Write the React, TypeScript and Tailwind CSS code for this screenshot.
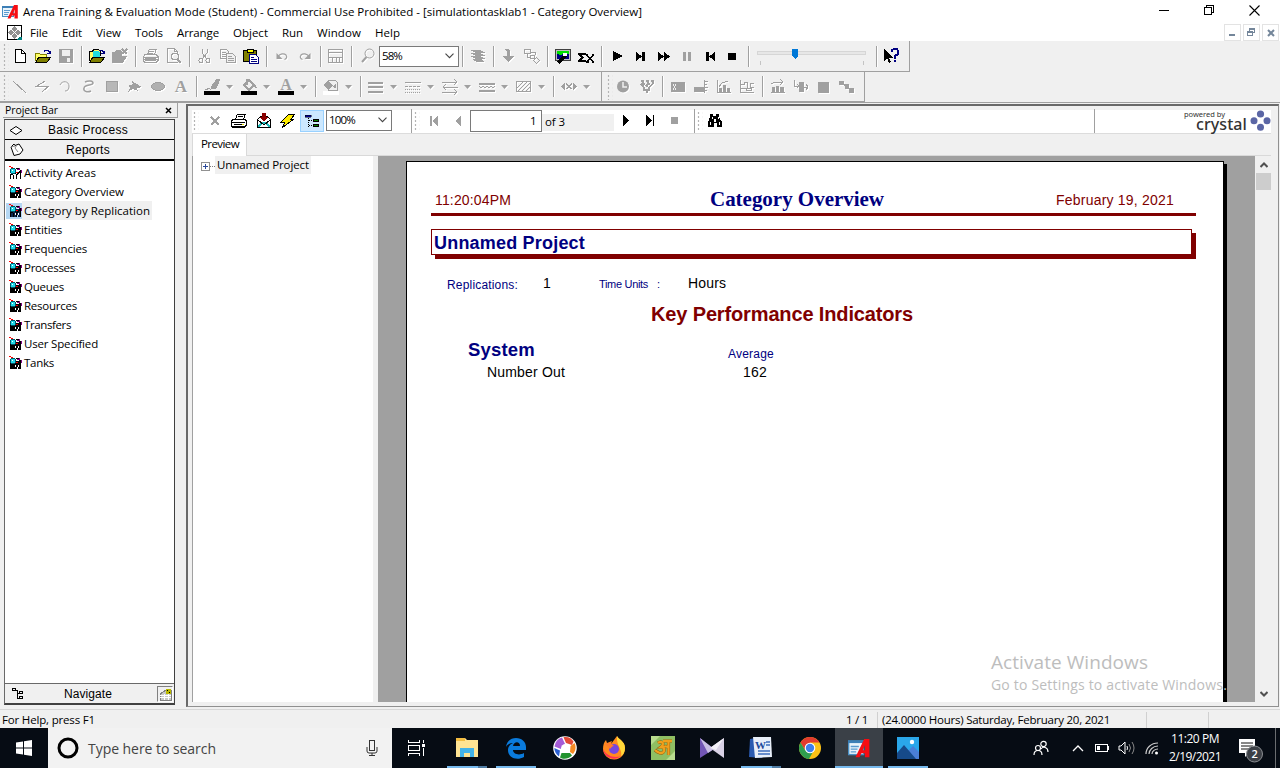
import { useLayoutEffect, useRef, type ReactNode } from "react";

const UI = "font-['Open_Sans','Noto_Sans',sans-serif] text-[11.5px]";
const ARIAL = "font-['Liberation_Sans',Arial,sans-serif]";

/* Single line of text tracked so that it fills the given width. */
function Fit({ w, children, className = "" }: { w: number; children: string; className?: string }) {
  const ref = useRef<HTMLSpanElement>(null);
  useLayoutEffect(() => {
    const el = ref.current;
    if (!el) return;
    el.style.letterSpacing = "0px";
    const natural = el.getBoundingClientRect().width;
    el.style.letterSpacing = `${(w - natural) / children.length}px`;
  }, [w, children]);
  return (
    <span ref={ref} className={`inline-block shrink-0 whitespace-pre ${className}`}>
      {children}
    </span>
  );
}

function Ico({ children, w = 16, h = 16, smooth = false, className = "" }: { children: ReactNode; w?: number; h?: number; smooth?: boolean; className?: string }) {
  return (
    <svg width={w} height={h} viewBox={`0 0 ${w} ${h}`} fill="none" shapeRendering={smooth ? "auto" : "crispEdges"} className={`block shrink-0 ${className}`}>
      {children}
    </svg>
  );
}

/* Disabled toolbar glyph: grey with a white emboss. */
function Dim({ children, smooth = false }: { children: ReactNode; smooth?: boolean }) {
  return (
    <Ico smooth={smooth} className="text-[#a0a0a0] drop-shadow-[1px_1px_0_#ffffff]">
      {children}
    </Ico>
  );
}

const Btn = ({ children }: { children: ReactNode }) => <div className="flex h-full w-[23px] shrink-0 items-center pl-[3px]">{children}</div>;
const Sep = () => (
  <div className="flex h-full w-2 shrink-0 items-center justify-center">
    <div className="h-[21px] w-0.5 border-l border-r border-l-[#a0a0a0] border-r-white" />
  </div>
);
const Drop = () => (
  <div className="flex h-full w-[14px] shrink-0 items-center pl-0.5">
    <svg width="8" height="5" viewBox="0 0 8 5" className="mt-0.5 block drop-shadow-[1px_1px_0_#fff]">
      <path d="M0 0h7L3.5 4z" fill="#a0a0a0" />
    </svg>
  </div>
);
const Grip = ({ h = "h-[26px]" }: { h?: string }) => (
  <div className={`${h} w-[7px] shrink-0 bg-[radial-gradient(#b4b4b4_1px,transparent_1.2px)] bg-[size:5px_4px]`} />
);
const Chevron = () => (
  <svg width="9" height="6" viewBox="0 0 9 6" className="block shrink-0">
    <path d="M.5.7l4 4 4-4" fill="none" stroke="#444" strokeWidth="1.1" />
  </svg>
);

const S = "currentColor";

function ArenaLogo({ big = false }: { big?: boolean }) {
  return (
    <svg width={big ? 23 : 17} height={big ? 23 : 16} viewBox="0 0 17 16" className="block shrink-0">
      <rect x="0.5" y="2.5" width="11" height="10" fill="#eaf4fb" stroke="#4a90c4" />
      <path d="M0 3h12" stroke="#3c7fb6" strokeWidth="2" />
      <path d="M2 6.5h6M2 8.5h5M2 10.5h4" stroke="#5a9bd0" />
      <path d="M5.5 14.5L12 1h3.800v13.5h-3.3v-3H9.900l-1.4 3zM11 9.3h1.6V5.4z" fill="#f70d12" />
    </svg>
  );
}

function Toolbar1() {
  return (
    <div className="flex h-[31px] w-[910px] items-center border-r border-b border-[#a0a0a0] pl-0.5">
      <Grip />
      <Btn><Ico><path d="M3.5 1.5h6l4 4v9h-10z" fill="#fff" stroke="#000" /><path d="M9.5 1.5v4h4" stroke="#000" /></Ico></Btn>
      <Btn><Ico><path d="M.5 13V5.5h4l1 1h6V9" fill="#ffff66" stroke="#808000" /><path d="M1 14l3-5h12l-4 5z" fill="#808000" stroke="#000" /><path d="M9 3.5l1-1h3l2 2m0-2v3h-3" stroke="#000080" /></Ico></Btn>
      <Btn><Dim><path d="M1 1h14v14H1z" fill={S} /><path d="M4 2h8v6H4zM9 10h3v4H9z" fill="#f0f0f0" /></Dim></Btn>
      <Sep />
      <Btn><Ico><path d="M.5 13V3.5h3l1-2h5l2 2V8" fill="#ffff66" stroke="#000" /><path d="M4 3h5l2 2v5H4z" fill="#20dede" /><path d="M1 14l3-5h12l-4 5z" fill="#808000" stroke="#000" /><path d="M10 2.5h3l2 2m0-2v3h-3" stroke="#000080" /></Ico></Btn>
      <Btn><Dim><path d="M0 4h3l1-2h5l1 2v4h5l-4 7H0z" fill={S} /><path d="M10 1l5 5m0-5l-5 5" stroke={S} strokeWidth="1.500" /></Dim></Btn>
      <Sep />
      <Btn><Dim><path d="M4.5 6l2-5h7l-2 5M2 6.5h11l2 2v4l-2 2H2l-2-2v-3z" stroke={S} /><path d="M1 9h14M1 11h14M6 3h5M5 5h5" stroke={S} /><path d="M2 10h11v3H2z" fill={S} /></Dim></Btn>
      <Btn><Dim><path d="M12 14.5H1.5V.5h7l3 3V5M8.5.5v3h3" stroke={S} /><circle cx="9" cy="8.500" r="3.500" stroke={S} /><path d="M11 11l4 4" stroke={S} strokeWidth="2" /></Dim></Btn>
      <Sep />
      <Btn><Dim><path d="M5 1v4l5 6M10 1v4l-5 6" stroke={S} /><circle cx="4" cy="12.500" r="2" stroke={S} /><circle cx="11" cy="12.500" r="2" stroke={S} /></Dim></Btn>
      <Btn><Dim><path d="M.5 1.5h6l2 2v7h-8z" stroke={S} /><path d="M2 4.5h4M2 6.5h4M2 8.5h4" stroke={S} /><path d="M6.500 5.500h6l3 3v6h-9z" fill="#f0f0f0" stroke={S} /><path d="M8 8.500h4M8 10.500h6M8 12.500h6" stroke={S} /></Dim></Btn>
      <Btn><Ico><path d="M.500 2.500h13v11H.500z" fill="#808000" stroke="#000" /><path d="M4 1h6v3H4z" fill="#ffff00" stroke="#000" /><path d="M6.500 6.500h6l3 3v6h-9z" fill="#fff" stroke="#000080" /><path d="M8 9.500h3M8 11.500h6M8 13.500h6" stroke="#000080" /></Ico></Btn>
      <Sep />
      <Btn><Dim smooth><path d="M4 8.500c2-3 6-3.500 8-1.500 1.500 2 .5 4-1.500 4.500" stroke={S} strokeWidth="1.200" /><path d="M2.500 5v6h6z" fill={S} /></Dim></Btn>
      <Btn><Dim smooth><path d="M12 8.500c-2-3-6-3.500-8-1.500-1.500 2-.5 4 1.500 4.500" stroke={S} strokeWidth="1.200" /><path d="M13.500 5v6h-6z" fill={S} /></Dim></Btn>
      <Sep />
      <Btn><Dim><path d="M.500 1.500h14v13H.500zM1 4.500h14M1 9.500h14M4.500 10v4M8.500 10v4M11.500 10v4" stroke={S} /></Dim></Btn>
      <Sep />
      <div className="flex h-full w-[23px] shrink-0 items-center pl-[5px]"><Dim smooth><circle cx="8.500" cy="5.500" r="4.500" stroke={S} /><path d="M5.500 9L1 14" stroke={S} strokeWidth="2" /></Dim></div>
      <div className={`flex h-[21px] w-20 shrink-0 items-center justify-between border border-[#7a7a7a] bg-white pr-1 pl-0.5 ${UI}`}><Fit w={20}>58%</Fit><Chevron /></div>
      <Sep />
      <Btn><Dim><path d="M0 2h10l6 3H6zM0 5h10l6 3H6zM0 8h10l6 3H6zM2 11h9l4 3H7z" fill={S} /></Dim></Btn>
      <Sep />
      <Btn><Dim><path d="M3 1h4l2 2v5h4l-5.500 6L2 8h4V4z" fill={S} /></Dim></Btn>
      <Btn><Dim><path d="M.500 1.500h6v4h-6zM6.500 7.500h4v3h-4zM3 5.500V9h3M7 4h4v3M12.500 9.500l3 3-3 3-3-3z" stroke={S} /></Dim></Btn>
      <Sep />
      <Btn><Ico><path d="M.500 1.500h15v11H.500z" fill="#c0c0c0" stroke="#404040" /><path d="M2 3h12v8H2z" fill="#000080" /><path d="M2 3h12v3l-4-1-4 2-4-1z" fill="#00e000" /><path d="M3 15l8-8" stroke="#000" strokeWidth="3" /><path d="M8 5h4v3H8z" fill="#fff" /></Ico></Btn>
      <Btn><Ico><path d="M0 5h8v2H3l3 3-3 2h5v2H0v-2l3-2-3-3z" fill="#000" /><path d="M9 7l6 7M15 7l-6 7M8 14h3m3 0h2M8 7h2m4 0h2" stroke="#000" strokeWidth="1.500" /></Ico></Btn>
      <Sep />
      <div className="flex h-full w-[139px] shrink-0 items-center gap-[7px] pl-1">
        <Ico><path d="M3 3v10l10-5z" fill="#000" /></Ico>
        <Ico><path d="M3 4v9l6-4.500zM9 4h3v9H9z" fill="#000" /></Ico>
        <Ico><path d="M2 4v9l6-4.500zM8 4v9l6-4.500z" fill="#000" /></Ico>
        <Ico><path d="M4 4h3v9H4zM9 4h3v9H9z" fill="#a0a0a0" /></Ico>
        <Ico><path d="M4 4h3v9H4zM13 4v9L7 8.500z" fill="#000" /></Ico>
        <Ico><path d="M3 5h8v7H3z" fill="#000" /></Ico>
      </div>
      <Sep />
      <svg width="117" height="24" viewBox="0 0 117 24" className="ml-[3px] block shrink-0" shapeRendering="crispEdges">
        <rect x="1.500" y="7.500" width="108" height="3" fill="#e7e7e7" stroke="#d6d6d6" />
        <path d="M4.500 17v4M107.500 17v4" stroke="#c4c4c4" />
        <path d="M36 5h6v7l-3 3-3-3z" fill="#0078d7" />
      </svg>
      <Sep />
      <svg width="19" height="18" viewBox="0 0 19 18" className="ml-0.5 block shrink-0" shapeRendering="crispEdges" fill="none">
        <path d="M1 2v12l3-3 2 5 2-1-2-4h4z" fill="#000" /><path d="M9 5V3l2-1h3l1 2v3l-3 2v3M11 14h2" stroke="#000080" strokeWidth="2" />
      </svg>
    </div>
  );
}

function Toolbar2() {
  return (
    <div className="flex h-[30px] items-center">
      <div className="flex h-full w-[602px] items-center border-r border-b border-[#a0a0a0] pl-0.5">
        <Grip />
        <Btn><Dim><path d="M1 2l13 12" stroke={S} /></Dim></Btn>
        <Btn><Dim><path d="M10 2L2 7h12l-7 6" stroke={S} /></Dim></Btn>
        <Btn><Dim smooth><path d="M2 6c2-5 9-4 9 1 0 3-1 5-4 5" stroke={S} /></Dim></Btn>
        <Btn><Dim smooth><path d="M4 3c4-2 8-1 8 1 0 3-8 1-9 5-1 3 3 5 7 3" stroke={S} strokeWidth="1.500" /></Dim></Btn>
        <Btn><Dim><path d="M2.500 2.500h11v10h-11z" fill="#b8b8b8" stroke={S} /></Dim></Btn>
        <Btn><Dim><path d="M5 2l10 6-5 1 1 3-5-2-5 3 2-4-2-2 5-2z" fill={S} /></Dim></Btn>
        <Btn><Dim><ellipse cx="8" cy="7.500" rx="6.500" ry="4" fill="#b0b0b0" stroke={S} /></Dim></Btn>
        <Btn><span className="w-4 text-center font-['Liberation_Serif',serif] text-[17px] leading-4 font-bold text-[#a0a0a0] [text-shadow:1px_1px_#fff]">A</span></Btn>
        <Sep />
        <Btn><Ico><path d="M8 7l5-7h3l-4 9-5 1zM1 11l5-2" stroke="#a0a0a0" fill="#a0a0a0" /><path d="M0 12h16v4H0z" fill="#000" /></Ico></Btn><Drop />
        <Btn><Ico><path d="M3 6l5-5 5 5-5 5zM6 0v6M13 5l2 4" stroke="#a0a0a0" strokeWidth="1.500" /><path d="M0 12h16v4H0z" fill="#000" /></Ico></Btn><Drop />
        <Btn><div className="flex w-4 flex-col items-center"><span className="font-['Liberation_Serif',serif] text-[16px] leading-3 font-bold text-[#a0a0a0]">A</span><div className="h-1 w-4 bg-black" /></div></Btn><Drop />
        <Sep />
        <Btn><Ico><path d="M0 12h16v4H0z" fill="#fff" /><path d="M5.500 1.500h7l2 2v8h-9z" stroke="#a0a0a0" /><path d="M0 6l5-4 5 5-5 4zM9 8l4-4v5z" fill="#a0a0a0" /></Ico></Btn><Drop />
        <Sep />
        <Btn><Dim><path d="M0 3.500h15M0 8h15M0 13h15" stroke={S} strokeWidth="2" /></Dim></Btn><Drop />
        <Btn><Dim><path d="M0 3.500h16" stroke={S} /><path d="M0 7.500h16" stroke={S} strokeDasharray="3 1" /><path d="M0 10.500h16M0 13.500h16" stroke={S} strokeDasharray="1 1" /></Dim></Btn><Drop />
        <Btn><Dim><path d="M0 3h15M1 8h15M0 13h15M12 0l3 3-3 3M4 5L1 8l3 3M12 10l3 3-3 3" stroke={S} /></Dim></Btn><Drop />
        <Btn><Dim><path d="M0 4.500h16M0 11.500h16" stroke={S} strokeWidth="2" /><path d="M0 7l2 2 2-2 2 2 2-2 2 2 2-2 2 2 2-2" stroke={S} /></Dim></Btn><Drop />
        <Btn><Dim><path d="M.500 2.500h14v10H.500zM1 9l6-6M2 12l9-9M6 12l8-8M10 12l4-4" stroke={S} /></Dim></Btn><Drop />
        <Sep />
        <Btn><Dim><path d="M4 3v9L0 7.500zM12 3v9l4-4.500z" fill={S} /><path d="M5.500 4.500l5 6M10.500 4.500l-5 6" stroke={S} strokeWidth="1.500" /></Dim></Btn><Drop />
      </div>
      <div className="flex h-full w-[263px] items-center border-r border-b border-[#a0a0a0] pl-1">
        <Grip />
        <Btn><Dim smooth><circle cx="7" cy="7.500" r="6" fill={S} /><path d="M7 3v5h4" stroke="#f0f0f0" strokeWidth="1.500" /></Dim></Btn>
        <Btn><Dim><path d="M2 2h2v3h2M7 2h2v3h2M12 2h2v3M2 5l3 3M7 6l2 2M13 5l-2 3M5 8v3h2M10 8v3H8v3" stroke={S} strokeWidth="1.500" /></Dim></Btn>
        <Sep />
        <Btn><Dim><path d="M1 3h14v10H1z" fill={S} /><path d="M3 5l3 6M6 5l-3 6" stroke="#f0f0f0" /></Dim></Btn>
        <Btn><Dim><path d="M1 8h10v5H1z" fill={S} /><path d="M11.500 1v13M11 2h4M11 5h3M11 8h4M11 11h3" stroke={S} /></Dim></Btn>
        <Btn><Dim><path d="M1.500 1v12.500H15M3 8l3-4 6-2" stroke={S} /><path d="M3 9h3v4H3zM7 6h3v7H7zM11 9h3v4h-3z" fill={S} /></Dim></Btn>
        <Btn><Dim><path d="M1.500 1v12.500H15M2 5h3V3h3v6h3V4h4M2 9h5v2h5V8h3" stroke={S} /></Dim></Btn>
        <Sep />
        <Btn><Dim><path d="M1 13.500h14M1 5l4-2h8M10 0l3 3-3 3" stroke={S} /><path d="M2 8h3v5H2zM6 7h3v6H6zM10 8h4v5h-4z" fill={S} /></Dim></Btn>
        <Btn><Dim><path d="M1.500 1v6h4M4 5l2 2-2 2M11 8h4M13 5l2 3-2 3" stroke={S} /><path d="M6 3h5v10H6z" fill={S} /></Dim></Btn>
        <Btn><Dim><path d="M2 3h11v11H2z" fill={S} /></Dim></Btn>
        <Btn><Dim><path d="M0 2h5v4H0zM6 5h4v5H6zM10 9h5v5h-5z" fill={S} /><path d="M4 5l9 6" stroke={S} /></Dim></Btn>
      </div>
    </div>
  );
}

const reports: [string, number][] = [
  ["Activity Areas", 72], ["Category Overview", 100], ["Category by Replication", 126], ["Entities", 38], ["Frequencies", 63],
  ["Processes", 51], ["Queues", 40], ["Resources", 53], ["Transfers", 47], ["User Specified", 74], ["Tanks", 30],
];

const ReportIcon = ({ outline, active }: { outline: boolean; active: boolean }) => (
  <Ico w={14} h={15}>
    <path d="M0 1.500h2M2 2.500h2" stroke="#f00" />
    <path d="M7 3h4v2h2v3h-3z" fill="#800080" />
    <path d="M1 7h5l2-2h3v3h1v6H9v-2H7v2H1z" fill={outline ? "#fff" : active ? "#0a2850" : "#000"} />
    <path d="M1.500 14v-4l2-1 1 2v3M7.500 14v-4l3-3 1 2v5M6 8l2 2M7 3.500h3M11.500 5v3" stroke="#000" />
    <path d="M8 5h2v1H8zM6 10h1v2H6zM9 10h1v2H9z" fill="#fff" />
    <path d="M7 7.500h2" stroke="#f00" />
    <circle cx="4" cy="6" r="2.800" fill="#20d8e8" stroke="#056" />
    <path d="M3 5h1v1H3z" fill="#fff" />
  </Ico>
);

function ProjectBar() {
  return (
    <div className={`ml-[3px] flex h-full w-[175px] shrink-0 flex-col text-black ${UI}`}>
      <div className="flex h-[15px] items-center justify-between border-r border-b border-[#a0a0a0] pr-[5px] pl-0.5">
        <Fit w={53} className="text-[10.5px] leading-[14px]">Project Bar</Fit>
        <Ico w={7} h={7} smooth><path d="M1 1l5 5M6 1L1 6" stroke="#000" strokeWidth="1.500" /></Ico>
      </div>
      <div className="mt-px ml-px flex h-[586px] w-[171px] flex-col border border-b-2 border-[#404040] border-l-[#696969]">
        <div className={`flex h-5 shrink-0 items-center border-b border-black pl-1 text-[12px] ${ARIAL}`}>
          <Ico w={14} h={10} smooth><path d="M1 5.500l6-4 6 4-6 4z" fill="#fff" stroke="#000" /></Ico>
          <Fit w={80} className="ml-[25px]">Basic Process</Fit>
        </div>
        <div className={`flex h-[21px] shrink-0 items-center border-b-2 border-black pl-[5px] text-[12px] ${ARIAL}`}>
          <Ico w={14} h={13} smooth><path d="M1 4l3-3 1 1.500 4-1.500 4 6-3 4-6 1.500z" fill="#fff" stroke="#000" /><path d="M7 2L5 5l3 4M1 4l4-1" stroke="#888" /></Ico>
          <Fit w={44} className="ml-[42px]">Reports</Fit>
        </div>
        <div className="flex grow flex-col bg-white pt-0.5">
          {reports.map(([name, w], i) => (
            <div key={name} className="flex h-[19px] items-center pl-px">
              <div className={`flex h-4 w-4 items-center pl-[3px] ${i === 2 ? "bg-[#b5d7f3]" : ""}`}><ReportIcon outline={i === 0} active={i === 2} /></div>
              <div className={`flex h-[19px] items-center pr-0.5 pl-0.5 ${i === 2 ? "bg-[#f0f0f0]" : ""}`}><Fit w={w}>{name}</Fit></div>
            </div>
          ))}
        </div>
        <div className={`flex h-5 shrink-0 items-center border-t border-[#696969] text-[12px] ${ARIAL}`}>
          <Ico w={12} h={11} className="ml-[7px]"><path d="M.500.500h3v2h-3zM7.500 3.500h3v2h-3zM7.500 8.500h3v2h-3zM3 2h2v8h2M5 5h2" stroke="#000" /></Ico>
          <Fit w={48} className="ml-10">Navigate</Fit>
          <div className="mr-px ml-auto flex h-4 w-4 items-end justify-end border border-r-white border-b-white border-[#808080]">
            <Ico w={13} h={13}><path d="M1 6l6-4h5v10H1z" fill="#c8c8c8" stroke="#808080" /><path d="M1 7h11M1 9.500h11M5 6v6M9 6v6" stroke="#fff" /><path d="M7 1h5v5H7z" fill="#b9b900" /><path d="M8 2h1v1H8zm2 2h1v1h-1z" fill="#000" /></Ico>
          </div>
        </div>
      </div>
    </div>
  );
}

function CrystalBar() {
  return (
    <div className={`mr-[7px] flex h-6 shrink-0 items-center border-b border-[#dcdcdc] bg-white pb-0.5 ${UI}`}>
      <Grip h="h-5" />
      <Ico className="ml-2"><path d="M4 4l8 8M12 4l-8 8" stroke="#a0a0a0" strokeWidth="2" /></Ico>
      <Ico className="ml-2"><path d="M4.500 6l2-5h8l-2 5M2 6.500h12l1 1v5l-2 2H2l-2-2v-4z" fill="#fff" stroke="#000" /><path d="M7 3.500h5M1 9h13M2 13h11" stroke="#000" /><path d="M3 11h8" stroke="#000" /><path d="M11 11h2" stroke="#dd0" /></Ico>
      <Ico className="ml-[9px]"><path d="M1.500 14.500v-8l3-3h7l3 3v8z" fill="#fff" stroke="#000" /><path d="M2 14l4-4h4l4 4" stroke="#20b8b8" strokeWidth="1.500" /><path d="M2 7l6 5 6-5" stroke="#000" /><path d="M6 0h4v4h2L8 9 4 4h2z" fill="#8b0000" /></Ico>
      <Ico className="ml-2"><path d="M9 1h6l-4 5h3L2 15l3-6H1z" fill="#ffec00" stroke="#000" /></Ico>
      <div className="ml-1 flex h-[22px] w-6 items-center justify-center border border-[#99d1ff] bg-[#cce8ff]">
        <Ico><path d="M1 2h6v2H1z" fill="#000090" stroke="#000" strokeWidth=".5" /><path d="M4.500 5v9M5 7.500h3M5 12.500h3" stroke="#000" strokeDasharray="1 1" /><path d="M9 6.500h5v2H9zM9 11.500h5v2H9z" fill="#008000" stroke="#000" /></Ico>
      </div>
      <div className="ml-0.5 flex h-[21px] w-[66px] shrink-0 items-center justify-between border border-[#7a7a7a] bg-white pr-1 pb-px pl-0.5"><Fit w={26}>100%</Fit><Chevron /></div>
      <div className="ml-[19px] h-6 w-px bg-[#a0a0a0]" />
      <div className="ml-px"><Grip h="h-5" /></div>
      <Ico className="ml-1.5"><path d="M5 3v10" stroke="#a0a0a0" strokeWidth="1.500" /><path d="M12 3v10L6 8z" fill="#a0a0a0" /></Ico>
      <Ico className="ml-2"><path d="M11 3v10L5 8z" fill="#a0a0a0" /></Ico>
      <div className="ml-1 flex h-[22px] w-[72px] items-center justify-end border border-[#7a7a7a] pr-[5px]"><Fit w={6}>1</Fit></div>
      <div className="mt-[3px] flex h-[17px] w-[72px] items-center bg-[#f0f0f0] pl-[3px]"><Fit w={20}>of 3</Fit></div>
      <Ico className="ml-[5px]"><path d="M4 2v11l6-5.500z" fill="#000" /></Ico>
      <Ico className="ml-2"><path d="M3 2v11l6-5.500zM10 2h1v11h-1z" fill="#000" /></Ico>
      <Ico className="ml-[7px]"><path d="M5 4h7v7H5z" fill="#a0a0a0" /></Ico>
      <div className="ml-3 h-6 w-px bg-[#a0a0a0]" />
      <div className="ml-px"><Grip h="h-5" /></div>
      <Ico className="ml-1"><path d="M3 1h3v2h3V1h3v3l3 5v5h-5v-4H7v4H1V9l2-5z" fill="#000" /><path d="M5 4v2M11 4v2M3 9v3M12 9v3M7 6h1v2H7z" stroke="#fff" /></Ico>
      <div className="ml-auto flex h-6 w-[177px] items-center justify-end border-l border-[#a0a0a0]">
        <div className="flex flex-col items-end pr-[3px] text-[#333]">
          <Fit w={41} className="mr-[22px] font-['Noto_Sans',sans-serif] text-[7.5px] leading-[8px]">powered by</Fit>
          <Fit w={51} className="mb-px font-['Noto_Sans',sans-serif] text-[16px] leading-[12px] font-medium">crystal</Fit>
        </div>
        <Ico w={21} h={21} smooth><g fill="#5b66a5"><circle cx="10.500" cy="4" r="3.600" /><circle cx="4" cy="10.700" r="3.500" /><circle cx="17" cy="10.700" r="3.500" /><circle cx="10.500" cy="17.200" r="3.500" /></g></Ico>
      </div>
    </div>
  );
}

function Report() {
  return (
    <div className={`ml-[28px] flex ${ARIAL}`}>
      <div className="mt-[5px] h-[542px] w-[818px] border border-b-0 border-black bg-white pl-6">
        <div className="flex h-[54px] w-[765px] items-end border-b-[3px] border-[#800000] pb-[5px] text-[14px] leading-4 text-[#800000]">
          <Fit w={76} className="ml-1">11:20:04PM</Fit>
          <Fit w={174} className="ml-[199px] font-['Liberation_Serif',serif] text-[21px] leading-[18px] font-bold text-[#000080]">Category Overview</Fit>
          <Fit w={118} className="ml-[172px]">February 19, 2021</Fit>
        </div>
        <div className="mt-[13px] flex h-[26px] w-[761px] items-center border border-[#800000] bg-white pt-0.5 pl-0.5 shadow-[4px_4px_0_#800000]">
          <Fit w={151} className="text-[18px] font-bold text-[#000080]">Unnamed Project</Fit>
        </div>
        <div className="mt-5 flex h-4 items-center pl-4">
          <Fit w={71} className="mt-[3px] text-[12px] text-[#000080]">Replications:</Fit>
          <span className="ml-[25px] w-2 text-[14px]">1</span>
          <Fit w={49} className="mt-[3px] ml-12 text-[11px] text-[#000080]">Time Units</Fit>
          <span className="mt-[3px] ml-[9px] text-[11px] text-[#000080]">:</span>
          <Fit w={38} className="ml-[28px] text-[14px]">Hours</Fit>
        </div>
        <div className="mt-[11px] h-6 pl-[220px] leading-6"><Fit w={262} className="text-[20px] leading-6 font-bold text-[#800000]">Key Performance Indicators</Fit></div>
        <div className="mt-3 flex h-6 items-center pl-[37px] text-[#000080]">
          <Fit w={67} className="text-[18.5px] font-bold">System</Fit>
          <Fit w={46} className="mt-2 ml-[193px] text-[12px]">Average</Fit>
        </div>
        <div className="flex h-5 items-center pl-14 text-[14px]">
          <Fit w={78}>Number Out</Fit>
          <Fit w={24} className="ml-[178px]">162</Fit>
        </div>
      </div>
      <div className="mt-2 h-[539px] w-[3px] bg-black" />
    </div>
  );
}

const Caret = ({ down = false }: { down?: boolean }) => (
  <svg width="8" height="6" viewBox="0 0 8 6" className={down ? "rotate-180" : ""}><path d="M.500 5L4 1.500 7.500 5" fill="none" stroke="#505050" strokeWidth="2" /></svg>
);

function Viewer() {
  return (
    <div className={`relative mt-px mr-px ml-2 flex h-[603px] min-w-0 grow flex-col border-t-2 border-r border-b border-l-2 border-[#909090] border-t-[#696969] border-l-[#696969] pt-1 pl-1 ${UI}`}>
      <CrystalBar />
      <div className="mr-[7px] flex h-[22px] shrink-0 border-b border-[#d9d9d9]">
        <div className="flex h-[22px] w-[55px] items-center border-r border-l border-[#d9d9d9] bg-white pb-0.5 pl-2"><Fit w={38}>Preview</Fit></div>
      </div>
      <div className="flex h-[546px] overflow-hidden">
        <div className="w-[181px] shrink-0 border-l border-[#a0a0a0] bg-white">
          <div className="flex h-[18px] items-center pl-2">
            <Ico w={9} h={9} className="mt-[3px]"><path d="M.500.500h8v8h-8z" fill="#fff" stroke="#919191" /><path d="M2 4.500h5M4.500 2v5" stroke="#2b4a9b" /></Ico>
            <div className="mt-[3px] h-px w-[5px] border-t border-dotted border-[#808080]" />
            <div className="flex h-[18px] items-center bg-[#f0f0f0] px-0.5 pb-px"><Fit w={92}>Unnamed Project</Fit></div>
          </div>
        </div>
        <div className="w-[5px] shrink-0" />
        <div className="w-[877px] shrink-0 bg-[#a0a0a0]"><Report /></div>
        <div className="ml-px flex w-[15px] shrink-0 flex-col items-center justify-between bg-[#f0f0f0]">
          <div className="flex w-full flex-col items-center">
            <div className="flex h-[17px] items-center"><Caret /></div>
            <div className="h-[17px] w-[15px] bg-[#cdcdcd]" />
          </div>
          <div className="flex h-[17px] items-center"><Caret down /></div>
        </div>
      </div>
      <div className="pointer-events-none absolute top-[543px] left-[803px] font-['Open_Sans','Noto_Sans',sans-serif] text-[#bdbdbd]">
        <Fit w={157} className="text-[19px] leading-[26px]">Activate Windows</Fit>
        <Fit w={236} className="text-[14px] leading-5">Go to Settings to activate Windows.</Fit>
      </div>
    </div>
  );
}

const App24 = ({ children }: { children: ReactNode }) => <svg width="24" height="24" viewBox="0 0 24 24" className="block">{children}</svg>;

const apps: { icon: ReactNode; bar: "none" | "full" | "split"; active?: boolean }[] = [
  { bar: "split", icon: <App24><path d="M1 4l1-2h8l2 2h11v17H1z" fill="#ffe493" /><path d="M1 2h9v3H1z" fill="#f3bd41" /><path d="M5 12h14v9h-4v-4H9v4H5z" fill="#43b3e8" /></App24> },
  { bar: "full", icon: <App24><path d="M2 11C3 4 8 2 12 2c6 0 10 4 10 9v3H9c0 4 6 6 11 3v4c-7 4-16 1-16-7 0-3 2-6 5-7-4 0-6 2-7 4zm7-1h7c0-5-6-5-7 0z" fill="#0a7bdc" /></App24> },
  { bar: "none", icon: <App24><circle cx="12" cy="12" r="11.800" fill="#fff" /><path d="M9 1.500a11 11 0 0 0-7.500 9L8 13l4-5z" fill="#a45bd6" /><path d="M10.500 1.200c5-.8 8 1.300 10 4.300L19 9l-6-2z" fill="#e34a36" /><path d="M21.500 7c2 4 1 8-1.500 11l-3-2 .5-6z" fill="#f58b23" /><path d="M19 19.500c-4 4-9 4-12 2L8.500 17H17z" fill="#22932e" /><path d="M6 20.500c-3-2-4.500-5-4.700-8.500L7 14.500z" fill="#2b5fd0" /><circle cx="12.500" cy="12.500" r="4.500" fill="#fff" /></App24> },
  { bar: "none", icon: <App24><path d="M15 0c1 3 8 5 8 12a11 11 0 0 1-22 1C1 9 2 6 4 4l1 3 5-2-1 3z" fill="#ff8a1e" /><path d="M15 0c1 3 8 5 8 12 0 4-2 7-4 8 2-6-5-10-4-20z" fill="#ffd83a" /><path d="M1 13c4 8 12 9 18 7a11 11 0 0 1-18-7z" fill="#ff2e55" /><circle cx="12" cy="13" r="5" fill="#7647dd" /><path d="M3 8c3-2 6-1 9 2-2 0-3 2-4 3z" fill="#ff7b2b" /></App24> },
  { bar: "none", icon: <App24><rect width="24" height="24" fill="#8fbf63" /><path d="M0 0h9L0 9zM24 15v9h-9z" fill="#b8dc8e" /><path d="M12 5h9M17.500 5v14M7 7c4-3 7 1 3 4 5 0 4 7-1 6-3-1-4-2-5-3M11 12c2-2 4-2 6-1" fill="none" stroke="#8a5a10" strokeWidth="3.200" /><path d="M12 5h9M17.500 5v14M7 7c4-3 7 1 3 4 5 0 4 7-1 6-3-1-4-2-5-3M11 12c2-2 4-2 6-1" fill="none" stroke="#f0a01c" strokeWidth="2.300" /></App24> },
  { bar: "none", icon: <App24><path d="M0 2l14 11L0 22z" fill="#7256b5" /><path d="M24 2L10 12l14 10z" fill="#d9d2e6" /><path d="M0 2l14 11-6 4z" fill="#c9bfe3" /><path d="M24 2L10 12l6 2z" fill="#f4f1f8" /></App24> },
  { bar: "split", icon: <App24><path d="M1 3l11-2 1 21-13-1z" fill="#2b5bb0" /><path d="M4 1h18l1 20-17 1z" fill="#e8eff9" /><path d="M17 6h4M17 9h4M9 15h12M9 18h12" stroke="#3c6ebc" strokeWidth="1.500" /><text x="6" y="13" fontSize="11" fontWeight="bold" fontFamily="Liberation Serif" fill="#1e4a9c">W</text></App24> },
  { bar: "none", icon: <App24><circle cx="12" cy="12" r="11" fill="#fbc116" /><path d="M2.500 6.500a11 11 0 0 1 19 0H12L7 14z" fill="#e33b2e" /><path d="M2.500 6.500A11 11 0 0 0 11 23l5-9-9 0z" fill="#2f9e4f" /><circle cx="12" cy="12" r="5.300" fill="#fff" /><circle cx="12" cy="12" r="4.200" fill="#3f7fec" /></App24> },
  { bar: "full", active: true, icon: <ArenaLogo big /> },
  { bar: "full", icon: <App24><rect x="1" y="1" width="22" height="22" fill="#2aa7ea" /><path d="M12 15l5-5 6 6v7H12z" fill="#4b7fd6" /><path d="M1 17l7-8 12 14H1z" fill="#164a89" /><circle cx="16" cy="6" r="2.200" fill="#fff" /></App24> },
];

function Taskbar() {
  return (
    <div className="flex h-10 bg-[#060c14] font-['Open_Sans','Noto_Sans',sans-serif]">
      <div className="flex w-12 items-center justify-center"><Ico w={16} h={16} smooth><path d="M0 2.500l7-1v6H0zM8 1.300L16 0v7.500H8zM0 8.500h7v6l-7-1zM8 8.500h8V16l-8-1.300z" fill="#fff" /></Ico></div>
      <div className="flex w-[344px] items-center bg-[#f2f2f2] pl-[9px]">
        <svg width="22" height="22" viewBox="0 0 22 22"><circle cx="11" cy="11" r="9" fill="none" stroke="#000" strokeWidth="3" /></svg>
        <Fit w={128} className="ml-[9px] text-[14px] text-[#444]">Type here to search</Fit>
        <Ico w={12} h={18} smooth className="mr-[14px] ml-auto"><rect x="3.500" y="1.500" width="5" height="10" stroke="#333" /><path d="M1 8v4q0 2 2 2h6q2 0 2-2V8M6 14v3M3 16.500h6" stroke="#333" /></Ico>
      </div>
      <div className="flex w-[51px] items-center pl-4"><Ico w={17} h={16}><path d="M.500 0v2.500h11V0M.500 5.500h11v5H.500zM.500 16v-2.500h11V16M15.500 0v3M15.500 8v8" stroke="#fff" /><path d="M14 4h3v3h-3z" fill="#fff" /></Ico></div>
      {apps.map((a, i) => (
        <div key={i} className={`flex shrink-0 flex-col items-center ${a.active ? "mr-px ml-px w-12 bg-[#3a4047]" : i === 0 || i === 9 ? "-ml-px w-[49px]" : "w-[49px]"}`}>
          <div className="flex h-[38px] items-center pt-0.5">{a.icon}</div>
          {a.bar !== "none" && (
            <div className={`flex h-0.5 bg-[#76b9ed] ${a.active ? "w-full" : "w-10"}`}>{a.bar === "split" && <div className="ml-auto w-[9px] bg-[#4f7ca3]" />}</div>
          )}
        </div>
      ))}
      <div className="ml-auto flex items-center text-white">
        <Ico w={16} h={16} smooth><g stroke="#fff" strokeWidth="1.200"><circle cx="10.500" cy="4" r="2.700" /><circle cx="5" cy="8" r="2.500" /><path d="M1 15c0-6 8-6 8 0M8 9c2-3 7-2 7 3" /></g></Ico>
        <Ico w={12} h={7} smooth className="ml-[23px]"><path d="M1 6l5-5 5 5" stroke="#fff" strokeWidth="1.300" /></Ico>
        <Ico w={15} h={10} className="ml-[11px]"><path d="M.500 1.500h12v7H.500zM13.500 3v4" stroke="#fff" /><path d="M2 3h3v4H2z" fill="#fff" /></Ico>
        <Ico w={17} h={14} smooth className="ml-2"><path d="M1 5h2l4-4v12L3 9H1z" stroke="#fff" /><path d="M9 5q1 2 0 4" stroke="#fff" /><path d="M11 3q3 4 0 8M14 1q4 6 0 12" stroke="#888" /></Ico>
        <Ico w={14} h={14} smooth className="ml-2.5"><path d="M1 13C1 7 6 2 13 2M4 13c0-4 4-8 9-8M7 13c0-3 3-5 6-5" stroke="#ccc" strokeWidth="1.200" /><circle cx="11.500" cy="12" r="1.500" fill="#fff" /></Ico>
        <div className="ml-2.5 flex w-[52px] flex-col items-center text-[12px] leading-[18px]">
          <Fit w={48}>11:20 PM</Fit>
          <Fit w={52}>2/19/2021</Fit>
        </div>
        <svg width="26" height="28" viewBox="0 0 26 28" className="mt-0.5 ml-[17px] block">
          <path d="M1 4h16v14h-6l-4 4v-4H1z" fill="#fff" /><path d="M3 8h12M3 11h12M3 14h8" stroke="#111" />
          <circle cx="16.500" cy="19" r="8" fill="#3c4046" stroke="#8a8d91" /><text x="13.500" y="23" fontSize="11" fontWeight="600" fontFamily="Open Sans" fill="#fff">2</text>
        </svg>
        <div className="ml-[11px] h-10 w-[5px] border-l border-[#6a6d70]" />
      </div>
    </div>
  );
}

const menus: [string, number][] = [["File", 18], ["Edit", 20], ["View", 25], ["Tools", 28], ["Arrange", 42], ["Object", 35], ["Run", 21], ["Window", 44], ["Help", 25]];

export default function App() {
  return (
    <div className="flex h-[768px] w-[1280px] flex-col overflow-hidden bg-[#f0f0f0] text-black">
      <div className={`flex h-6 shrink-0 items-center bg-white pl-0.5 ${UI}`}>
        <ArenaLogo />
        <Fit w={619} className="ml-1">Arena Training &amp; Evaluation Mode (Student) - Commercial Use Prohibited - [simulationtasklab1 - Category Overview]</Fit>
        <div className="mr-5 mb-1 ml-auto flex items-center gap-[35px]">
          <Ico w={10} h={10}><path d="M0 5.500h10" stroke="#000" /></Ico>
          <Ico w={10} h={10}><path d="M.500 2.500h7v7h-7zM2.500 2V.500h7v7H8" stroke="#000" /></Ico>
          <Ico w={11} h={11} smooth><path d="M.500.500l10 10M10.500.500l-10 10" stroke="#000" strokeWidth="1.100" /></Ico>
        </div>
      </div>
      <div className={`flex h-[17px] shrink-0 items-center bg-white pl-[7px] ${UI}`}>
        <Ico w={16} h={16}><path d="M.500.500h14v11l-3 3H.500z" fill="#fff" stroke="#000" /><path d="M7.500 2l2 2-2 2-2-2zM7.500 9l2 2-2 2-2-2zM4 5.500l2 2-2 2-2-2zM11 5.500l2 2-2 2-2-2z" fill="#909090" stroke="#909090" /><path d="M12 12h3v3H9z" fill="#008080" /></Ico>
        <div className="ml-[7px] flex gap-3.5">{menus.map(([m, w]) => <Fit key={m} w={w}>{m}</Fit>)}</div>
        <div className="mr-px ml-auto flex gap-0.5">
          <div className="flex h-[17px] w-[17px] items-center justify-center border border-[#e3e3e3]"><Ico w={7} h={7}><path d="M0 5h6v2H0z" fill="#74869a" /></Ico></div>
          <div className="flex h-[17px] w-[17px] items-center justify-center border border-[#e3e3e3]"><Ico w={9} h={9}><path d="M.500 3.500h5v4h-5zM2.500 3V.500h5v4H6M1 4h4M3 1h4" stroke="#74869a" /></Ico></div>
          <div className="flex h-[17px] w-[17px] items-center justify-center border border-[#e3e3e3]"><Ico w={8} h={8} smooth><path d="M1 1l6 6M7 1L1 7" stroke="#74869a" strokeWidth="2" /></Ico></div>
        </div>
      </div>
      <div className="flex h-[62px] shrink-0 flex-col border-b border-[#a0a0a0]">
        <Toolbar1 />
        <Toolbar2 />
      </div>
      <div className="flex h-[606px] shrink-0">
        <ProjectBar />
        <Viewer />
      </div>
      <div className={`flex h-[19px] shrink-0 items-center border-t border-[#d7d7d7] pt-px pl-0.5 ${UI}`}>
        <Fit w={93}>For Help, press F1</Fit>
        <Fit w={22} className="ml-[751px]">1 / 1</Fit>
        <div className="ml-[9px] h-4 border-l border-[#d0d0d0]" />
        <Fit w={228} className="ml-1">(24.0000 Hours) Saturday, February 20, 2021</Fit>
        <div className="ml-9 h-4 border-l border-[#d0d0d0]" />
        <div className="ml-[61px] h-4 border-l border-[#d0d0d0]" />
      </div>
      <Taskbar />
    </div>
  );
}
